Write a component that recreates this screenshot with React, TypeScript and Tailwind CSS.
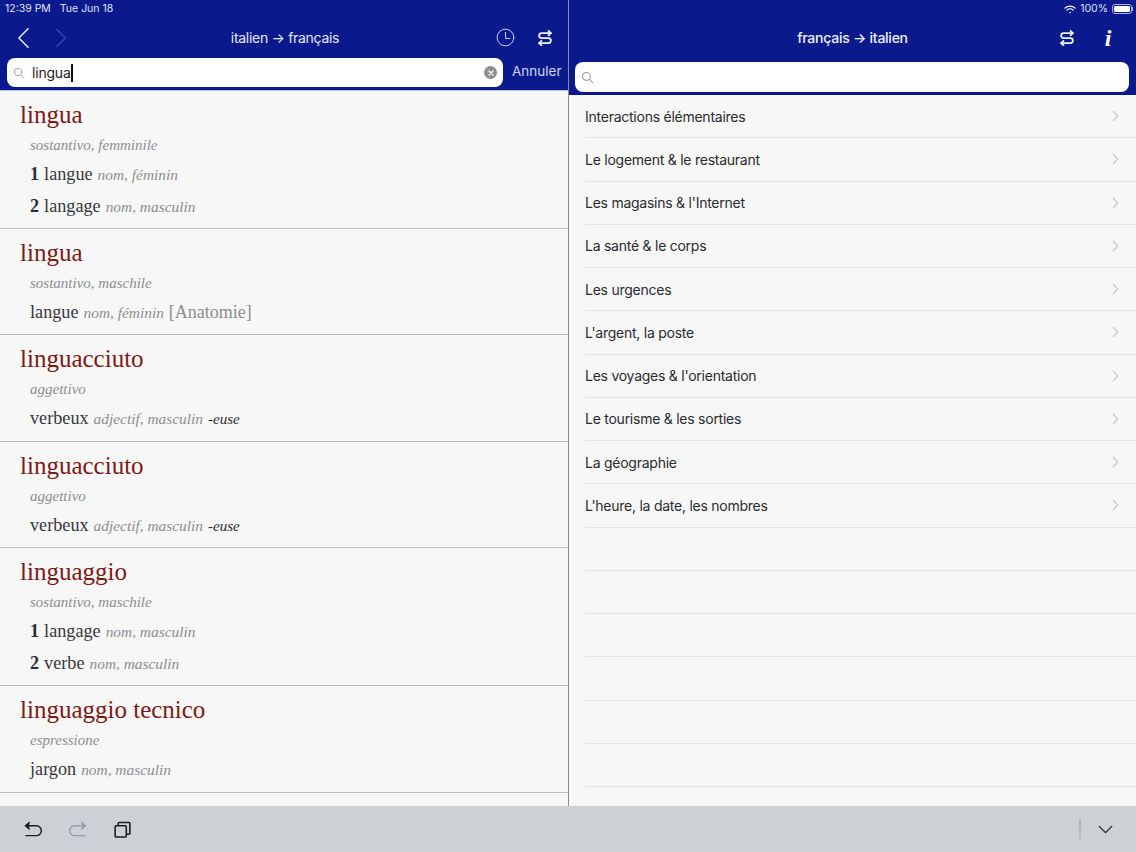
import React from "react";

const serif = "font-['Liberation_Serif',serif]";

type Entry = { word: string; pos: string; lines: { n?: string; t: string; g: string; x?: string; fem?: string }[] };

const entries: Entry[] = [
  { word: "lingua", pos: "sostantivo, femminile", lines: [{ n: "1", t: "langue", g: "nom, féminin" }, { n: "2", t: "langage", g: "nom, masculin" }] },
  { word: "lingua", pos: "sostantivo, maschile", lines: [{ t: "langue", g: "nom, féminin", x: "[Anatomie]" }] },
  { word: "linguacciuto", pos: "aggettivo", lines: [{ t: "verbeux", g: "adjectif, masculin", fem: "-euse" }] },
  { word: "linguacciuto", pos: "aggettivo", lines: [{ t: "verbeux", g: "adjectif, masculin", fem: "-euse" }] },
  { word: "linguaggio", pos: "sostantivo, maschile", lines: [{ n: "1", t: "langage", g: "nom, masculin" }, { n: "2", t: "verbe", g: "nom, masculin" }] },
  { word: "linguaggio tecnico", pos: "espressione", lines: [{ t: "jargon", g: "nom, masculin" }] },
];

const topics = [
  "Interactions élémentaires",
  "Le logement & le restaurant",
  "Les magasins & l'Internet",
  "La santé & le corps",
  "Les urgences",
  "L'argent, la poste",
  "Les voyages & l'orientation",
  "Le tourisme & les sorties",
  "La géographie",
  "L'heure, la date, les nombres",
];

function Swap({ className = "" }: { className?: string }) {
  return (
    <svg viewBox="0 0 18 18" className={className} fill="none" stroke="currentColor" strokeWidth="2" strokeLinecap="round" strokeLinejoin="round">
      <path d="M15.5 3.5H5.2a2.8 2.8 0 0 0 0 5.6h7.6a2.8 2.8 0 0 1 0 5.6H2.5" />
      <path d="M13 1l2.6 2.5L13 6" />
      <path d="M5 12.2l-2.6 2.5L5 17.2" />
    </svg>
  );
}

function Search({ className = "" }: { className?: string }) {
  return (
    <svg viewBox="0 0 14 14" className={className} fill="none" stroke="#9a9a9f" strokeWidth="1.1" strokeLinecap="round">
      <circle cx="5.8" cy="5.8" r="4.3" />
      <path d="M9 9l3.8 3.8" />
    </svg>
  );
}

function Row({ e }: { e: Entry }) {
  return (
    <div className={`border-b border-[#bdbdc4] pl-[20px] pt-[8px] ${e.lines.length === 2 ? "h-[138px]" : "h-[106.4px]"}`}>
      <div className="h-[32px] text-[25px] leading-[32px] text-[#7d1a14]">{e.word}</div>
      <div className="ml-[10px] mt-[2px] h-[24px] text-[15px] italic leading-[24px] text-[#8d8d90]">{e.pos}</div>
      {e.lines.map((l, i) => (
        <div key={i} className={`ml-[10px] flex h-[26px] items-baseline gap-[5px] text-[18.2px] leading-[26px] text-[#38383c] ${i === 0 ? "mt-[4px]" : "mt-[6px]"}`}>
          {l.n && <span className="font-bold text-[#2c2c30]">{l.n}</span>}
          <span>{l.t}</span>
          <span className="text-[15.4px] italic text-[#8d8d90]">{l.g}</span>
          {l.x && <span className="text-[18px] text-[#8d8d90]">{l.x}</span>}
          {l.fem && <span className="text-[15px] italic text-[#2c2c30]">{l.fem}</span>}
        </div>
      ))}
    </div>
  );
}

export default function App() {
  return (
    <div className="flex h-[852px] w-[1136px] flex-col overflow-hidden bg-[#f7f7f8] font-['Inter',sans-serif]">
      <div className="flex min-h-0 flex-1">
        {/* Left pane */}
        <div className="flex w-[569px] shrink-0 flex-col border-r border-[#8b8b93]">
          <div className="h-[91px] shrink-0 border-b border-[#b9bde0] bg-[#0a1a8c] text-white">
            <div className="flex h-[17px] items-center gap-[9px] pl-[5px] pt-[1px] text-[10.5px] text-[#dfe2f5]">
              <span>12:39 PM</span>
              <span>Tue Jun 18</span>
            </div>
            <div className="flex h-[41px] items-center">
              <svg viewBox="0 0 14 24" className="ml-[17px] h-[22px] w-[13px]" fill="none" stroke="#eef0fb" strokeWidth="1.6" strokeLinecap="round" strokeLinejoin="round">
                <path d="M12 2L2 12l10 10" />
              </svg>
              <svg viewBox="0 0 14 24" className="ml-[25px] h-[22px] w-[12px]" fill="none" stroke="#3b49ac" strokeWidth="1.5" strokeLinecap="round" strokeLinejoin="round">
                <path d="M2 2l10 10L2 22" />
              </svg>
              <div className="flex-1 pl-[7px] text-center text-[14px] tracking-[-0.3px] text-[#e6e8f8]">italien → français</div>
              <svg viewBox="0 0 20 20" className="mr-[22px] h-[19px] w-[19px]" fill="none" stroke="#d5d9f4" strokeWidth="1" strokeLinecap="round" strokeLinejoin="round">
                <circle cx="10" cy="10" r="8.8" />
                <path d="M10 4.6V11h4.6" />
              </svg>
              <Swap className="mr-[15px] h-[16px] w-[16px] text-[#eef0fb]" />
            </div>
            <div className="flex h-[32px] items-start gap-[9px] pl-[7px]">
              <div className="flex h-[29px] w-[496px] items-center rounded-[8px] bg-white pl-[6px] pr-[6px]">
                <Search className="h-[12px] w-[12px]" />
                <span className="ml-[7px] border-r-2 border-[#10101a] text-[14px] leading-[18px] tracking-[-0.2px] text-[#1c1c20]">lingua</span>
                <span className="ml-auto flex h-[13px] w-[13px] items-center justify-center rounded-full bg-[#8e8e93]">
                  <svg viewBox="0 0 10 10" className="h-[8px] w-[8px]" stroke="#fff" strokeWidth="1.6" strokeLinecap="round">
                    <path d="M2.5 2.5l5 5M7.5 2.5l-5 5" />
                  </svg>
                </span>
              </div>
              <span className="text-[13.5px] leading-[26px] text-[#d0d4f2]">Annuler</span>
            </div>
          </div>
          <div className={`min-h-0 flex-1 overflow-hidden ${serif}`}>
            {entries.map((e, i) => (
              <Row key={i} e={e} />
            ))}
          </div>
        </div>

        {/* Right pane */}
        <div className="flex min-w-0 flex-1 flex-col">
          <div className="h-[95px] shrink-0 bg-[#0a1a8c] text-white">
            <div className="flex h-[17px] items-center justify-end gap-[4px] pr-[3px] pt-[1px] text-[10.5px] text-[#dfe2f5]">
              <svg viewBox="0 0 16 12" className="h-[9px] w-[12px]" fill="none" stroke="#fff" strokeLinecap="round">
                <path d="M1.2 4.2a9.8 9.8 0 0 1 13.6 0" strokeWidth="1.6" />
                <path d="M3.8 6.9a6.1 6.1 0 0 1 8.4 0" strokeWidth="1.6" />
                <circle cx="8" cy="10" r="1.1" fill="#fff" stroke="none" />
              </svg>
              <span>100%</span>
              <span className="flex items-center">
                <span className="h-[10px] w-[20px] rounded-[3px] border border-[#aab0df] p-[1px]">
                  <span className="block h-full w-full rounded-[1.5px] bg-white" />
                </span>
                <span className="h-[4px] w-[1px] bg-[#aab0df]" />
              </span>
            </div>
            <div className="flex h-[41px] items-center">
              <div className="flex-1 pl-[77px] text-center text-[14px] font-medium tracking-[-0.25px] text-[#eef0fb]">français → italien</div>
              <Swap className="mr-[27px] h-[16px] w-[16px] text-[#eef0fb]" />
              <span className={`mr-[22px] w-[12px] text-center text-[24px] font-bold italic leading-[24px] text-white ${serif}`}>i</span>
            </div>
            <div className="px-[6px] pt-[4px]">
              <div className="flex h-[30px] w-[554px] items-center rounded-[8px] bg-white pl-[6px]">
                <Search className="h-[13px] w-[13px]" />
              </div>
            </div>
          </div>
          <div className="min-h-0 flex-1 overflow-hidden pl-[16px]">
            {topics.map((t) => (
              <div key={t} className="flex h-[43.25px] items-center border-b border-[#e3e3e6] pr-[17px] text-[14px] tracking-[-0.25px] text-[#2b2b2f]">
                <span>{t}</span>
                <svg viewBox="0 0 8 14" className="ml-auto h-[12px] w-[7px]" fill="none" stroke="#c9c9ce" strokeWidth="1.5" strokeLinecap="round" strokeLinejoin="round">
                  <path d="M1.5 1.5L6.5 7l-5 5.5" />
                </svg>
              </div>
            ))}
            {Array.from({ length: 6 }).map((_, i) => (
              <div key={i} className="h-[43.25px] border-b border-[#e3e3e6]" />
            ))}
          </div>
        </div>
      </div>

      {/* Toolbar */}
      <div className="flex h-[46px] shrink-0 items-center bg-[#cdd0d5] pl-[24px] pr-[23px]">
        <svg viewBox="0 0 20 18" className="h-[17px] w-[19px]" fill="none" stroke="#1e1e22" strokeWidth="1.5" strokeLinecap="round" strokeLinejoin="round">
          <path d="M1.5 5h11.5a5 5 0 0 1 0 10.5H2" />
          <path d="M5.5 1.5L1.5 5l4 3.5" fill="#1e1e22" />
        </svg>
        <svg viewBox="0 0 20 18" className="ml-[25px] h-[17px] w-[19px]" fill="none" stroke="#9a9da3" strokeWidth="1.5" strokeLinecap="round" strokeLinejoin="round">
          <path d="M18.5 5H7a5 5 0 0 0 0 10.5h11" />
          <path d="M14.5 1.5l4 3.5-4 3.5" fill="#9a9da3" />
        </svg>
        <svg viewBox="0 0 18 18" className="ml-[27px] h-[17px] w-[17px]" fill="none" stroke="#1e1e22" strokeWidth="1.7" strokeLinejoin="round">
          <rect x="1.2" y="5" width="11.8" height="12" rx="1" />
          <path d="M4.5 5V2.6a1 1 0 0 1 1-1h10.3a1 1 0 0 1 1 1v10.5a1 1 0 0 1-1 1H13" />
        </svg>
        <div className="ml-auto h-[20px] w-[2px] bg-[#b4b7bc]" />
        <svg viewBox="0 0 16 10" className="ml-[17px] h-[9px] w-[15px]" fill="none" stroke="#1e1e22" strokeWidth="1.4" strokeLinecap="round" strokeLinejoin="round">
          <path d="M1 1.5l7 7 7-7" />
        </svg>
      </div>
    </div>
  );
}
